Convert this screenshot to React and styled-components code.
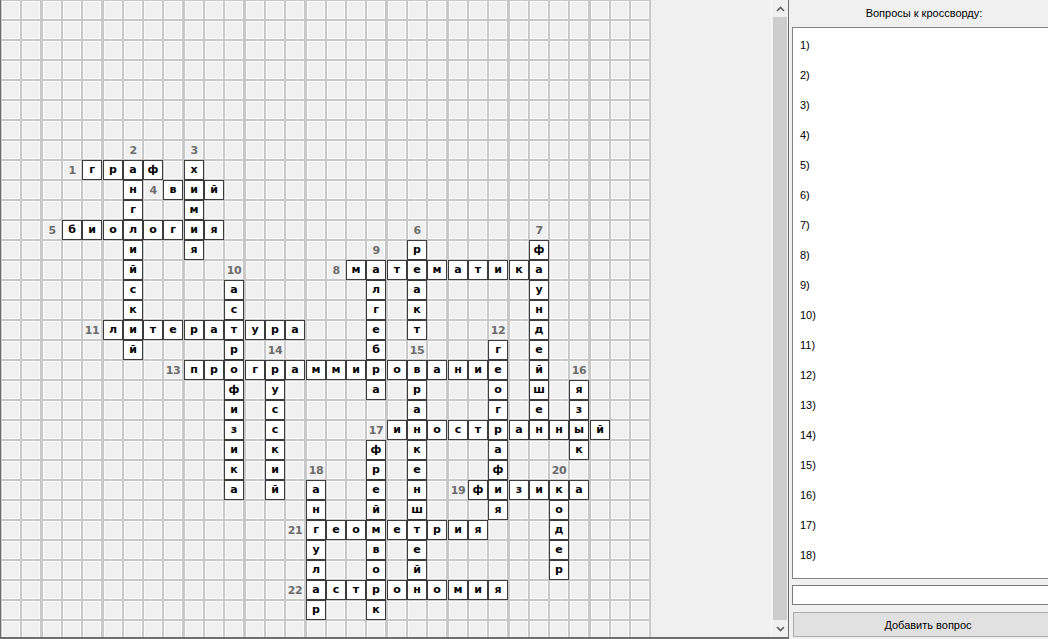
import React from "react";
import styled, { createGlobalStyle } from "styled-components";

const GlobalStyle = createGlobalStyle`
  html, body { margin: 0; padding: 0; background: #f0f0f0; }
  body { font-family: "Liberation Sans", Arial, sans-serif; }
  #root { width: 1048px; height: 639px; }
`;

const ROWS = 32;
const COLS = 32;
const PITCH = 20.3;

const WORDS = [
  { n: 1, r: 8, c: 4, d: "a", t: "граф" },
  { n: 2, r: 8, c: 6, d: "d", t: "английский" },
  { n: 3, r: 8, c: 9, d: "d", t: "химия" },
  { n: 4, r: 9, c: 8, d: "a", t: "вий" },
  { n: 5, r: 11, c: 3, d: "a", t: "биология" },
  { n: 6, r: 12, c: 20, d: "d", t: "реакт" },
  { n: 7, r: 12, c: 26, d: "d", t: "фаундейшен" },
  { n: 8, r: 13, c: 17, d: "a", t: "математика" },
  { n: 9, r: 13, c: 18, d: "d", t: "алгебра" },
  { n: 10, r: 14, c: 11, d: "d", t: "астрофизика" },
  { n: 11, r: 16, c: 5, d: "a", t: "литература" },
  { n: 12, r: 17, c: 24, d: "d", t: "география" },
  { n: 13, r: 18, c: 9, d: "a", t: "программирование" },
  { n: 14, r: 18, c: 13, d: "d", t: "русский" },
  { n: 15, r: 18, c: 20, d: "d", t: "вранкенштейн" },
  { n: 16, r: 19, c: 28, d: "d", t: "язык" },
  { n: 17, r: 21, c: 19, d: "a", t: "иностранный" },
  { n: 17, r: 22, c: 18, d: "d", t: "фреймворк" },
  { n: 18, r: 24, c: 15, d: "d", t: "ангулар" },
  { n: 19, r: 24, c: 23, d: "a", t: "физика" },
  { n: 20, r: 24, c: 27, d: "d", t: "кодер" },
  { n: 21, r: 26, c: 15, d: "a", t: "геометрия" },
  { n: 22, r: 29, c: 15, d: "a", t: "астрономия" },
];

function buildBoard() {
  const cells = Array.from({ length: ROWS }, () =>
    Array.from({ length: COLS }, () => ({ kind: "empty" }))
  );
  WORDS.forEach((w) => {
    const lr = w.d === "a" ? w.r : w.r - 1;
    const lc = w.d === "a" ? w.c - 1 : w.c;
    cells[lr][lc] = { kind: "num", value: w.n };
    [...w.t].forEach((ch, i) => {
      const r = w.d === "a" ? w.r : w.r + i;
      const c = w.d === "a" ? w.c + i : w.c;
      cells[r][c] = { kind: "letter", value: ch };
    });
  });
  return cells;
}

const BOARD = buildBoard();
const TRACKS = Array.from({ length: COLS }, (_, c) =>
  c === COLS - 1
    ? 20
    : Math.round(PITCH * (c + 1)) - Math.round(PITCH * c)
)
  .map((w) => `${w}px`)
  .join(" ");
const QUESTIONS = Array.from({ length: 18 }, (_, i) => `${i + 1})`);

const Window = styled.div`
  display: flex;
  width: 1048px;
  height: 639px;
  overflow: hidden;
  background: #f0f0f0;
`;

const GridPanel = styled.div`
  display: flex;
  width: 789px;
  height: 639px;
  box-sizing: border-box;
  border-left: 1px solid #6e6e6e;
  border-right: 1px solid #6e6e6e;
  border-bottom: 2px solid #6e6e6e;
  flex-shrink: 0;
`;

const GridScroller = styled.div`
  flex: 1;
  overflow: hidden;
  background: #f0f0f0;
`;

const Board = styled.div`
  display: grid;
  grid-template-columns: ${(p) => p.$tracks};
  grid-auto-rows: 20px;
  width: max-content;
  padding: 1px 0 0 1px;
  background: #c8c8c8;
`;

const Cell = styled.div`
  box-sizing: border-box;
  width: 18px;
  height: 18px;
  background: #f0f0f0;
  border: 1px solid #fbfbfb;
  display: flex;
  align-items: center;
  justify-content: center;
`;

const NumCell = styled(Cell)`
  font-family: "DejaVu Sans", Verdana, sans-serif;
  font-weight: bold;
  font-size: 11px;
  color: #6d6d6d;
  letter-spacing: -0.5px;
`;

const LetterCell = styled.div`
  box-sizing: border-box;
  width: 20px;
  height: 20px;
  margin: -1px 0 0 -1px;
  background: #ffffff;
  border: 1px solid #3c3c3c;
  display: flex;
  align-items: center;
  justify-content: center;
  font-family: "DejaVu Sans", Verdana, sans-serif;
  font-weight: bold;
  font-size: 11px;
  color: #000;
  padding-bottom: 1px;
`;

const VScroll = styled.div`
  width: 16px;
  display: flex;
  flex-direction: column;
  background: #f0f0f0;
  border-left: 1px solid #f7f7f7;
`;

const ScrollArrow = styled.div`
  height: 17px;
  display: flex;
  align-items: center;
  justify-content: center;
  color: #606060;
`;

const Thumb = styled.div`
  flex: 1;
  margin: 0 1px;
  background: #cdcdcd;
`;

const Side = styled.div`
  width: 259px;
  overflow: hidden;
  flex-shrink: 0;
`;

const SideInner = styled.div`
  width: 264px;
  padding-left: 3px;
  display: flex;
  flex-direction: column;
`;

const Caption = styled.div`
  height: 27px;
  display: flex;
  align-items: center;
  justify-content: center;
  font-size: 11px;
  color: #000;
  padding-bottom: 1px;
  box-sizing: border-box;
`;

const QuestionList = styled.div`
  height: 552px;
  box-sizing: border-box;
  border: 1px solid #828282;
  background: #fff;
  padding: 8px 0 0 7px;
`;

const Question = styled.div`
  height: 30px;
  line-height: 18px;
  font-size: 11px;
  color: #000;
`;

const TextBox = styled.div`
  margin-top: 6px;
  height: 20px;
  box-sizing: border-box;
  border: 1px solid #7a7a7a;
  background: #fff;
`;

const AddButton = styled.div`
  margin-top: 7px;
  margin-left: 1px;
  width: 270px;
  height: 25px;
  box-sizing: border-box;
  border: 1px solid #adadad;
  background: #e1e1e1;
  display: flex;
  align-items: center;
  justify-content: center;
  font-size: 11px;
  color: #000;
`;

const Chevron = ({ down }) => (
  <svg width="9" height="6" viewBox="0 0 9 6">
    <path
      d={down ? "M1 1 L4.5 4.5 L8 1" : "M1 5 L4.5 1.5 L8 5"}
      fill="none"
      stroke="currentColor"
      strokeWidth="1.6"
    />
  </svg>
);

export default function App() {
  return (
    <Window>
      <GlobalStyle />
      <GridPanel>
        <GridScroller>
          <Board $tracks={TRACKS}>
            {BOARD.flatMap((row, r) =>
              row.map((cell, c) => {
                const key = `${r}-${c}`;
                if (cell.kind === "letter")
                  return <LetterCell key={key}>{cell.value}</LetterCell>;
                if (cell.kind === "num")
                  return <NumCell key={key}>{cell.value}</NumCell>;
                return <Cell key={key} />;
              })
            )}
          </Board>
        </GridScroller>
        <VScroll>
          <ScrollArrow>
            <Chevron />
          </ScrollArrow>
          <Thumb />
          <ScrollArrow>
            <Chevron down />
          </ScrollArrow>
        </VScroll>
      </GridPanel>
      <Side>
        <SideInner>
          <Caption>Вопросы к кроссворду:</Caption>
          <QuestionList>
            {QUESTIONS.map((q) => (
              <Question key={q}>{q}</Question>
            ))}
          </QuestionList>
          <TextBox />
          <AddButton>Добавить вопрос</AddButton>
        </SideInner>
      </Side>
    </Window>
  );
}
